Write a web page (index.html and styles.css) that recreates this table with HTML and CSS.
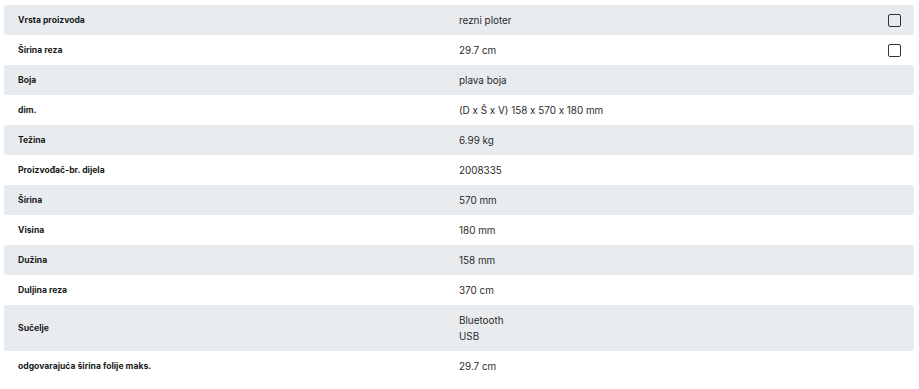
FILE: index.html
```html
<!DOCTYPE html>
<html lang="hr">
<head>
<meta charset="utf-8">
<title>Specifikacije</title>
<link rel="stylesheet" href="styles.css">
</head>
<body>
<div class="specs">
  <div class="row shaded"><div class="label">Vrsta proizvoda</div><div class="value">rezni ploter</div><div class="check"><span class="box"></span></div></div>
  <div class="row"><div class="label">Širina reza</div><div class="value">29.7 cm</div><div class="check"><span class="box"></span></div></div>
  <div class="row shaded"><div class="label">Boja</div><div class="value">plava boja</div><div class="check"></div></div>
  <div class="row"><div class="label">dim.</div><div class="value">(D x Š x V) 158 x 570 x 180 mm</div><div class="check"></div></div>
  <div class="row shaded"><div class="label">Težina</div><div class="value">6.99 kg</div><div class="check"></div></div>
  <div class="row"><div class="label">Proizvođač-br. dijela</div><div class="value">2008335</div><div class="check"></div></div>
  <div class="row shaded"><div class="label">Širina</div><div class="value">570 mm</div><div class="check"></div></div>
  <div class="row"><div class="label">Visina</div><div class="value">180 mm</div><div class="check"></div></div>
  <div class="row shaded"><div class="label">Dužina</div><div class="value">158 mm</div><div class="check"></div></div>
  <div class="row"><div class="label">Duljina reza</div><div class="value">370 cm</div><div class="check"></div></div>
  <div class="row shaded"><div class="label">Sučelje</div><div class="value">Bluetooth<br>USB</div><div class="check"></div></div>
  <div class="row"><div class="label">odgovarajuća širina folije maks.</div><div class="value">29.7 cm</div><div class="check"></div></div>
</div>
</body>
</html>
```
FILE: styles.css
```css
html, body {
  margin: 0;
  padding: 0;
  background: #ffffff;
}
body {
  padding: 5px 5px 0 4px;
  font-family: Inter, "Noto Sans", sans-serif;
  font-feature-settings: "calt" 0;
  color: #222222;
}
.specs {
  display: flex;
  flex-direction: column;
}
.row {
  display: flex;
  align-items: center;
  padding: 7px 13px 7px 14px;
  line-height: 16px;
  border-radius: 2px;
}
.row.shaded {
  background: #e9ecef;
}
.label {
  width: 441px;
  flex: none;
  font-size: 8.6px;
  font-weight: 700;
  color: #1a1a1a;
}
.value {
  flex: 1;
  font-size: 9.9px;
  color: #2a2a2a;
}
.check {
  width: 13px;
  flex: none;
  display: flex;
  align-items: center;
}
.box {
  display: block;
  width: 13px;
  height: 13px;
  box-sizing: border-box;
  border: 1.5px solid #333333;
  border-radius: 2px;
}
```
